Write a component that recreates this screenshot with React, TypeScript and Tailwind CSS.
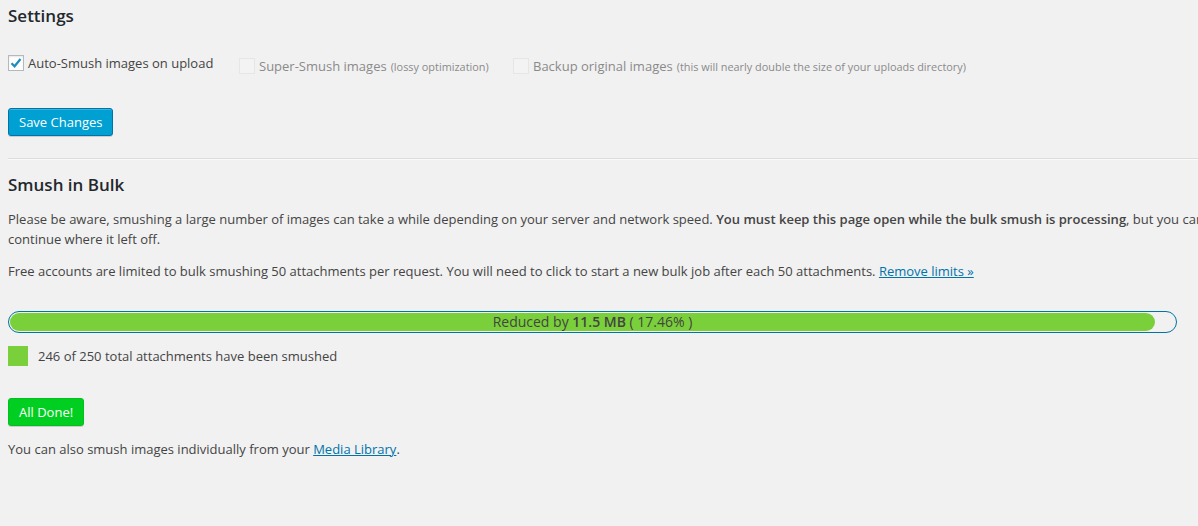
type Opt = {
  label: string;
  note?: string;
  checked?: boolean;
  disabled?: boolean;
  offset?: boolean;
};

const options: Opt[] = [
  { label: "Auto-Smush images on upload", checked: true },
  { label: "Super-Smush images", note: "(lossy optimization)", disabled: true, offset: true },
  {
    label: "Backup original images",
    note: "(this will nearly double the size of your uploads directory)",
    disabled: true,
    offset: true,
  },
];

const Checkbox = ({ checked, disabled }: { checked?: boolean; disabled?: boolean }) => (
  <span
    className={`flex h-4 w-4 shrink-0 items-center justify-center border ${
      disabled ? "border-[#e6e6e6] bg-[#f3f3f3]" : "border-[#b4b9be] bg-white shadow-[inset_0_1px_2px_rgba(0,0,0,0.1)]"
    }`}
  >
    {checked && (
      <svg width="14" height="14" viewBox="0 0 14 14">
        <path d="M2.5 7.2 L5.6 10.3 L11.5 3" fill="none" stroke="#1e8cbe" strokeWidth="2.2" />
      </svg>
    )}
  </span>
);

const Option = ({ label, note, checked, disabled, offset }: Opt) => (
  <label className={`flex h-[22px] items-center gap-1 ${offset ? "mt-[3px]" : ""}`}>
    <Checkbox checked={checked} disabled={disabled} />
    <span className={disabled ? "text-[#8a8a8a]" : "text-[#444]"}>
      {label}
      {note && <span className="ml-1 text-[10.9px]">{note}</span>}
    </span>
  </label>
);

const Button = ({ children, green }: { children: string; green?: boolean }) => (
  <button
    className={`h-[28px] rounded-[3px] border px-[10px] text-[13px] leading-[26px] text-white ${
      green
        ? "border-[#00c21d] bg-[#00cf21] shadow-[0_1px_0_rgba(0,0,0,0.15)]"
        : "border-[#0073aa] bg-[#00a0d2] shadow-[inset_0_1px_0_rgba(120,200,230,0.5),0_1px_0_rgba(0,0,0,0.15)]"
    }`}
  >
    {children}
  </button>
);

const App = () => {
  const percent = 98.3;
  return (
    <div
      className="h-[526px] w-[1198px] overflow-hidden bg-[#f1f1f1] text-[13px] leading-[20px] text-[#444]"
      style={{ fontFamily: '"Open Sans", "Noto Sans", sans-serif' }}
    >
      <div className="w-[1600px] pl-2">
        <h2 className="mt-1 text-[17px] leading-[24px] font-semibold text-[#23282d]">Settings</h2>

        <div className="mt-[24px] flex items-start">
          <div className="w-[231px]">
            <Option {...options[0]} />
          </div>
          <div className="w-[274px]">
            <Option {...options[1]} />
          </div>
          <Option {...options[2]} />
        </div>

        <div className="mt-[31px]">
          <Button>Save Changes</Button>
        </div>

        <div className="mt-[22px] border-t border-b border-t-[#dcdcdc] border-b-[#fafafa]" />

        <h2 className="mt-[13px] text-[17px] leading-[24px] font-semibold text-[#23282d]">Smush in Bulk</h2>

        <p className="mt-[12px] whitespace-nowrap">
          Please be aware, smushing a large number of images can take a while depending on your server and network
          speed. <strong className="font-semibold">You must keep this page open while the bulk smush is processing</strong>, but
          you can leave at any time and come back to
          <br />
          continue where it left off.
        </p>

        <p className="mt-[12px]">
          Free accounts are limited to bulk smushing 50 attachments per request. You will need to click to start a new
          bulk job after each 50 attachments.{" "}
          <a href="#" className="text-[#0073aa] underline">
            Remove limits »
          </a>
        </p>

        <div className="relative mt-[30px] h-[22px] w-[1169px] rounded-full border border-[#0074a2] p-px">
          <div className="h-full rounded-full bg-[#7ad03a]" style={{ width: `${percent}%` }} />
          <div className="absolute inset-0 flex items-center justify-center text-[14px] text-[#444]">
            Reduced by&nbsp;<strong className="font-semibold">11.5 MB</strong>&nbsp;( 17.46% )
          </div>
        </div>

        <div className="mt-[13px] flex items-center gap-[10px]">
          <span className="h-5 w-5 bg-[#7ad03a]" />
          <span>246 of 250 total attachments have been smushed</span>
        </div>

        <div className="mt-[32px]">
          <Button green>All Done!</Button>
        </div>

        <p className="mt-[13px]">
          You can also smush images individually from your{" "}
          <a href="#" className="text-[#0073aa] underline">
            Media Library
          </a>
          .
        </p>
      </div>
    </div>
  );
};

export default App;
